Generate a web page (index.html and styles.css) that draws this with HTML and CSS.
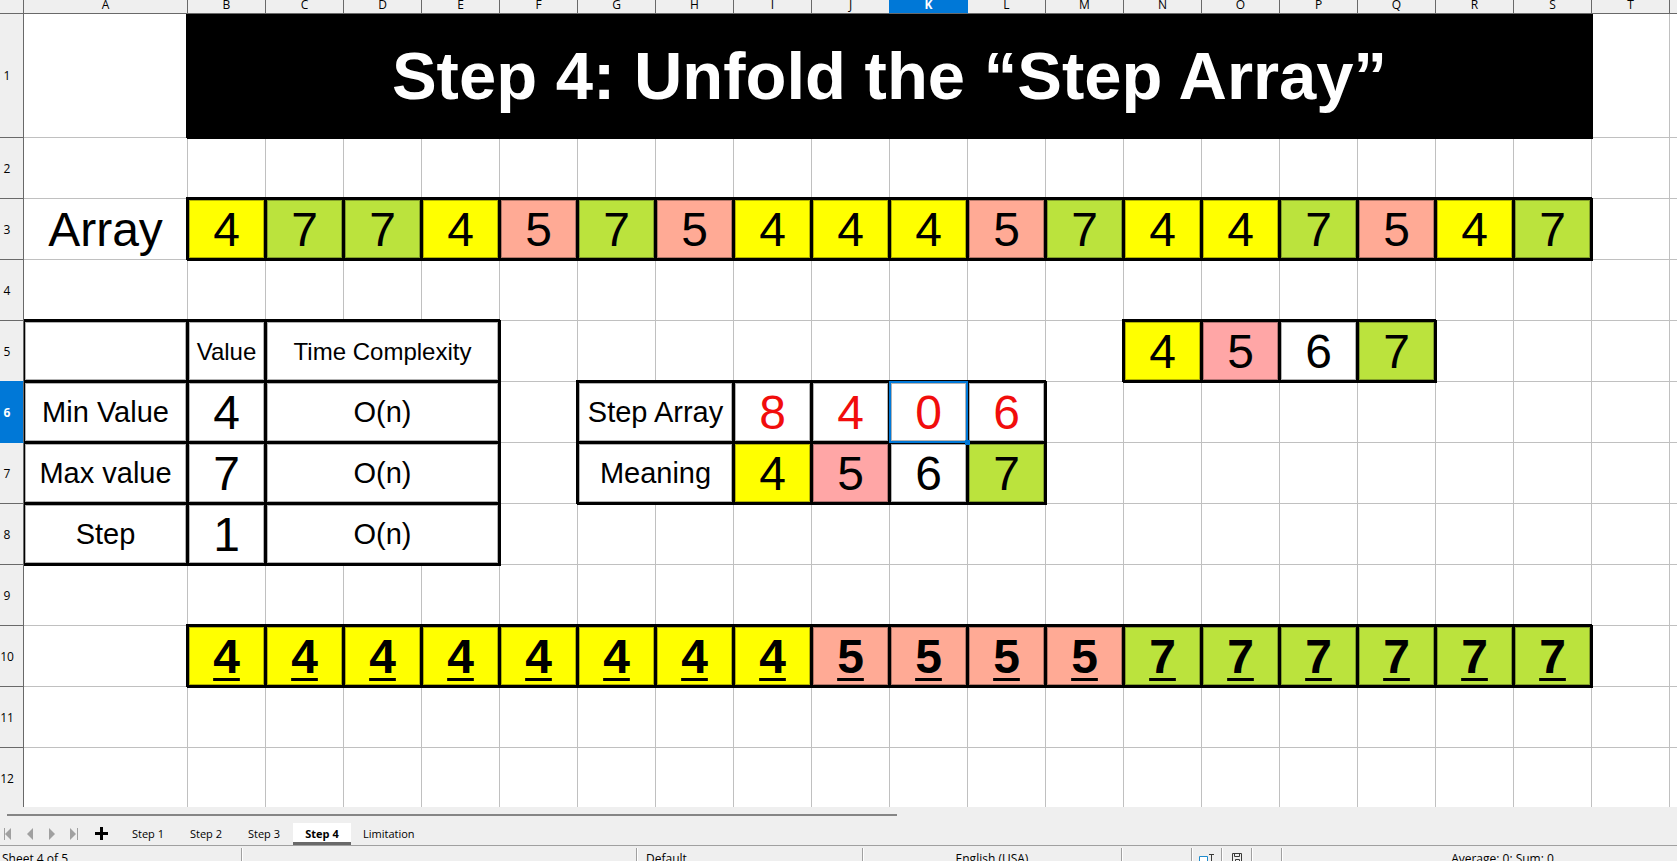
FILE: index.html
```html
<!DOCTYPE html>
<html lang="en">
<head>
<meta charset="utf-8">
<title>Step Array</title>
<link rel="stylesheet" href="styles.css">
</head>
<body>
<main class="sheet">
<table class="grid">
<colgroup><col class="col-head"><col class="col-a"><col class="col-std" span="19"><col></colgroup>
<thead>
<tr class="letters"><th></th><th>A</th><th>B</th><th>C</th><th>D</th><th>E</th><th>F</th><th>G</th><th>H</th><th>I</th><th class="before">J</th><th class="active">K</th><th>L</th><th>M</th><th>N</th><th>O</th><th>P</th><th>Q</th><th>R</th><th>S</th><th>T</th><th></th></tr>
</thead>
<tbody>
<tr class="tall"><th>1</th><td></td><td class="box title" colspan="18">Step 4: Unfold the “Step Array”</td><td></td><td></td></tr>
<tr><th>2</th><td></td><td></td><td></td><td></td><td></td><td></td><td></td><td></td><td></td><td></td><td></td><td></td><td></td><td></td><td></td><td></td><td></td><td></td><td></td><td></td><td></td></tr>
<tr><th>3</th><td>Array</td><td class="box yellow">4</td><td class="box lime">7</td><td class="box lime">7</td><td class="box yellow">4</td><td class="box salmon">5</td><td class="box lime">7</td><td class="box salmon">5</td><td class="box yellow">4</td><td class="box yellow">4</td><td class="box yellow">4</td><td class="box salmon">5</td><td class="box lime">7</td><td class="box yellow">4</td><td class="box yellow">4</td><td class="box lime">7</td><td class="box salmon">5</td><td class="box yellow">4</td><td class="box lime">7</td><td></td><td></td></tr>
<tr><th>4</th><td></td><td></td><td></td><td></td><td></td><td></td><td></td><td></td><td></td><td></td><td></td><td></td><td></td><td></td><td></td><td></td><td></td><td></td><td></td><td></td><td></td></tr>
<tr><th class="above">5</th><td class="box"></td><td class="box small">Value</td><td class="box small" colspan="3">Time Complexity</td><td></td><td></td><td></td><td></td><td></td><td></td><td></td><td></td><td class="box yellow">4</td><td class="box pink">5</td><td class="box">6</td><td class="box lime">7</td><td></td><td></td><td></td><td></td></tr>
<tr><th class="active">6</th><td class="box label">Min Value</td><td class="box">4</td><td class="box label" colspan="3">O(n)</td><td></td><td class="box label" colspan="2">Step Array</td><td class="box red">8</td><td class="box red">4</td><td class="box red">0<span class="cursor"></span></td><td class="box red">6</td><td></td><td></td><td></td><td></td><td></td><td></td><td></td><td></td><td></td></tr>
<tr><th>7</th><td class="box label">Max value</td><td class="box">7</td><td class="box label" colspan="3">O(n)</td><td></td><td class="box label" colspan="2">Meaning</td><td class="box yellow">4</td><td class="box pink">5</td><td class="box">6</td><td class="box lime">7</td><td></td><td></td><td></td><td></td><td></td><td></td><td></td><td></td><td></td></tr>
<tr><th>8</th><td class="box label">Step</td><td class="box">1</td><td class="box label" colspan="3">O(n)</td><td></td><td></td><td></td><td></td><td></td><td></td><td></td><td></td><td></td><td></td><td></td><td></td><td></td><td></td><td></td><td></td></tr>
<tr><th>9</th><td></td><td></td><td></td><td></td><td></td><td></td><td></td><td></td><td></td><td></td><td></td><td></td><td></td><td></td><td></td><td></td><td></td><td></td><td></td><td></td><td></td></tr>
<tr class="result"><th>10</th><td></td><td class="box yellow">4</td><td class="box yellow">4</td><td class="box yellow">4</td><td class="box yellow">4</td><td class="box yellow">4</td><td class="box yellow">4</td><td class="box yellow">4</td><td class="box yellow">4</td><td class="box salmon">5</td><td class="box salmon">5</td><td class="box salmon">5</td><td class="box salmon">5</td><td class="box lime">7</td><td class="box lime">7</td><td class="box lime">7</td><td class="box lime">7</td><td class="box lime">7</td><td class="box lime">7</td><td></td><td></td></tr>
<tr><th>11</th><td></td><td></td><td></td><td></td><td></td><td></td><td></td><td></td><td></td><td></td><td></td><td></td><td></td><td></td><td></td><td></td><td></td><td></td><td></td><td></td><td></td></tr>
<tr><th>12</th><td></td><td></td><td></td><td></td><td></td><td></td><td></td><td></td><td></td><td></td><td></td><td></td><td></td><td></td><td></td><td></td><td></td><td></td><td></td><td></td><td></td></tr>
</tbody>
</table>
</main>
<footer class="bottom">
<div class="scroll"><div class="thumb"></div></div>
<nav class="tabs">
<button class="step" aria-label="First sheet"><svg width="10" height="12" viewBox="0 0 10 12"><path d="M1.500 0v12" stroke="#a0a0a0"/><path d="M8 0v12L2 6z" fill="#a0a0a0"/></svg></button>
<button class="step" aria-label="Previous sheet"><svg width="10" height="12" viewBox="0 0 10 12"><path d="M8 0v12L2 6z" fill="#a0a0a0"/></svg></button>
<button class="step" aria-label="Next sheet"><svg width="10" height="12" viewBox="0 0 10 12"><path d="M2 0v12l6-6z" fill="#a0a0a0"/></svg></button>
<button class="step" aria-label="Last sheet"><svg width="10" height="12" viewBox="0 0 10 12"><path d="M1 0v12l6-6z" fill="#a0a0a0"/><path d="M8.500 0v12" stroke="#a0a0a0"/></svg></button>
<button class="add" aria-label="Add sheet"><svg width="13" height="13" viewBox="0 0 13 13"><path d="M6.500 0v13M0 6.500h13" stroke="#000" stroke-width="3"/></svg></button>
<button class="tab">Step 1</button>
<button class="tab">Step 2</button>
<button class="tab">Step 3</button>
<button class="tab current">Step 4</button>
<button class="tab">Limitation</button>
</nav>
<div class="status">
<div class="cell count">Sheet 4 of 5</div>
<div class="cell wide"></div>
<div class="cell style">Default</div>
<div class="cell lang">English (USA)</div>
<div class="cell mode"></div>
<div class="cell icon"><svg width="18" height="14" viewBox="0 0 18 14"><path d="M1.500 4.500h8v5h-8z" fill="#fff" stroke="#1e8bcd"/><path d="M11 2.500h5M13.500 2.500V14" stroke="#3a3a38" fill="none"/></svg></div>
<div class="cell icon"><svg width="12" height="14" viewBox="0 0 12 14"><path d="M1.500 1.500h9v10h-7l-2-2zM3.500 1.500v3h5v-3M4.500 11.500v-4h4v4M6.500 9v2" fill="none" stroke="#3a3a38"/></svg></div>
<div class="cell icon"></div>
<div class="cell sum">Average: 0; Sum: 0</div>
</div>
</footer>
</body>
</html>
```

FILE: styles.css
```css
* { box-sizing: border-box; }

body {
  margin: 0;
  height: 100vh;
  display: flex;
  flex-direction: column;
  overflow: hidden;
  background: #fff;
  color: #000;
  font-family: "Open Sans", "Noto Sans", sans-serif;
  font-size: 12px;
}

.sheet {
  flex: 1;
  min-height: 0;
  overflow: hidden;
}

.grid {
  width: 100%;
  table-layout: fixed;
  border-collapse: separate;
  border-spacing: 0;
}

.col-head { width: 24px; }
.col-a { width: 164px; }
.col-std { width: 78px; }

.grid th, .grid td {
  padding: 0;
  text-align: center;
  vertical-align: middle;
  white-space: nowrap;
}

.grid th {
  position: sticky;
  left: 0;
  z-index: 2;
  padding-right: 9px;
  background: #efefef;
  border-right: 1px solid #696969;
  border-bottom: 1px solid #696969;
  font-weight: 400;
}

.grid .letters th {
  position: relative;
  height: 14px;
  padding: 0 0 3px;
  line-height: 10px;
}

.grid td {
  height: 61px;
  padding-top: 2px;
  border-right: 1px solid #c0c0c0;
  border-bottom: 1px solid #c0c0c0;
  font-family: "Liberation Sans", Arial, sans-serif;
  font-size: 48px;
  line-height: 54px;
}

.grid .tall td { height: 124px; }

.grid tr > :last-child { border-right: 0; }

.grid th.active {
  background: #0078d7;
  border-color: #0078d7;
  color: #fff;
  font-weight: 700;
}

.grid tbody th.active { border-right-color: #696969; }
.grid .letters th.active { border-bottom-color: #696969; }
.grid .before { border-right-color: #0078d7; }
.grid .above { border-bottom-color: #0078d7; }

/* Heavy 3px frame centred on the grid lines around the cell. */
.grid .box {
  position: relative;
  border-color: #000;
  box-shadow:
    0 0 0 1px #000,
    -1px -1px 0 1px #000,
    inset 0 0 0 1px #000,
    inset 0 0 0 2px rgba(0, 0, 0, 0.3);
}

.grid .title {
  padding-top: 0;
  background: #000;
  color: #fff;
  font-size: 67px;
  font-weight: 700;
}

.grid .label { padding-top: 0; font-size: 29px; }
.grid .small { font-size: 24px; }

.yellow { background: #ffff00; }
.lime { background: #bbe33d; }
.salmon { background: #ffaa95; }
.pink { background: #ffa6a6; }
.red { color: #f10d0c; }

.result .box {
  font-weight: 700;
  text-decoration: underline;
  text-decoration-thickness: 3px;
  text-underline-offset: 5px;
}

.cursor {
  position: absolute;
  z-index: 1;
  inset: -1px;
  border: 2px solid #0078d7;
}

.cursor::after {
  content: "";
  position: absolute;
  right: -4px;
  bottom: -4px;
  width: 5px;
  height: 5px;
  background: #0078d7;
}

.bottom {
  height: 54px;
  overflow: hidden;
  background: #efefef;
}

.scroll {
  height: 16px;
  padding: 7px 0 0 7px;
}

.thumb {
  width: 53.3%;
  height: 2px;
  background: #858585;
}

.tabs {
  display: flex;
  height: 23px;
  border-bottom: 1px solid #a0a0a0;
}

.tabs button {
  display: flex;
  align-items: center;
  justify-content: center;
  border: 0;
  padding: 0 0 1px;
  background: transparent;
  color: #000;
  font: inherit;
}

.tabs .step { width: 22px; padding-right: 7px; }
.tabs .add { width: 26px; margin-right: 5px; }
.tabs .tab { min-width: 58px; padding: 0 12px 1px; font-size: 11px; }

.tabs .current {
  border-bottom: 3px solid #696969;
  padding-top: 2px;
  background: #fff;
  font-weight: 700;
}

.status {
  display: flex;
  height: 24px;
  padding-top: 2px;
}

.cell {
  display: flex;
  align-items: center;
  padding-bottom: 1px;
  border-right: 1px solid #a0a0a0;
  box-shadow: 1px 0 0 #fff;
  white-space: nowrap;
}

.count { width: 242px; padding-left: 2px; }
.wide { width: 395px; }
.style { width: 226px; padding-left: 9px; }
.lang { width: 259px; justify-content: center; }
.mode { width: 70px; }
.icon { width: 30px; justify-content: center; }
.sum { flex: 1; justify-content: center; padding-left: 46px; border-right: 0; }
```
